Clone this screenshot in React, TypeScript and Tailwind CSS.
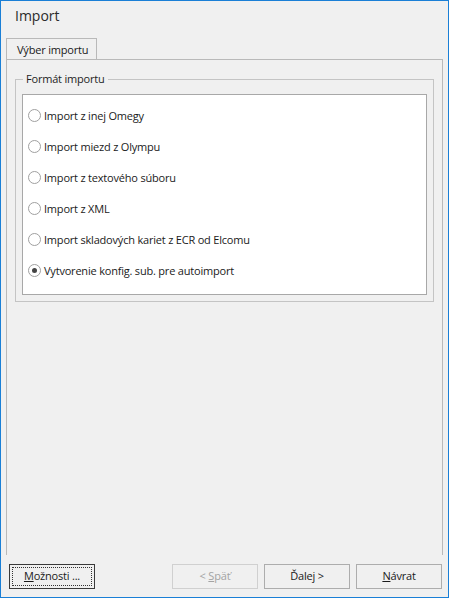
import React from "react";

const items = [
  "Import z inej Omegy",
  "Import miezd z Olympu",
  "Import z textového súboru",
  "Import z XML",
  "Import skladových kariet z ECR od Elcomu",
  "Vytvorenie konfig. sub. pre autoimport",
];

function Radio({ checked }: { checked?: boolean }) {
  return (
    <span className="w-[13px] h-[13px] rounded-full border border-[#a0a0a0] bg-white flex items-center justify-center shrink-0">
      {checked && <span className="w-[5px] h-[5px] rounded-full bg-[#444444]" />}
    </span>
  );
}

export default function App() {
  return (
    <div
      className="w-[449px] h-[598px] border border-[#1a7fd6] bg-[#f0f0f0] flex flex-col text-[11px] tracking-[-0.2px] text-[#1a1a1a] whitespace-nowrap"
      style={{ fontFamily: '"Open Sans", "Noto Sans", sans-serif' }}
    >
      <div className="h-[37px] pl-[14px] pt-[5px] text-[14px] tracking-normal text-[#2b2b2b] leading-[20px]">Import</div>
      <div className="pl-[5px] flex">
        <div className="h-[21px] w-[91px] border border-b-0 border-[#b9b9b9] pl-[10px] pt-[1px] leading-[19px] bg-[#f0f0f0]">
          Výber importu
        </div>
      </div>
      <div className="ml-[5px] mr-[5px] h-[496px] border border-b-0 border-[#b9b9b9] pl-[8px] pr-[8px] pt-[11px]">
        <fieldset className="border border-[#c4c4c4] px-[6px] pb-[6px]">
          <legend className="ml-[1px] px-[3px] leading-[16px] text-[#1e1e1e]">Formát importu</legend>
          <div className="mt-[7px] border border-[#a8a8a8] bg-white h-[201px] pt-[5px] pl-[5px]">
            {items.map((t, i) => (
              <div key={t} className="h-[31px] flex items-center gap-[3px]">
                <Radio checked={i === 5} />
                <span className="leading-[16px]">{t}</span>
              </div>
            ))}
          </div>
        </fieldset>
      </div>
      <div className="mt-[9px] h-[25px] flex pl-[8px] pr-[6px]">
        <div className="w-[86px] h-[25px] border border-[#3a3a3a] p-[2px]">
          <div className="w-full h-full border border-dotted border-[#333] flex items-center justify-center">
            <span><span className="underline">M</span>ožnosti ...</span>
          </div>
        </div>
        <div className="flex-1" />
        <div className="w-[86px] h-[25px] border border-[#d0d0d0] flex items-center justify-center text-[#a3a3a3]">
          <span>&lt; <span className="underline">S</span>päť</span>
        </div>
        <div className="w-[86px] h-[25px] ml-[6px] border border-[#adadad] flex items-center justify-center">
          <span>Ďalej &gt;</span>
        </div>
        <div className="w-[86px] h-[25px] ml-[6px] border border-[#adadad] flex items-center justify-center">
          <span><span className="underline">N</span>ávrat</span>
        </div>
      </div>
    </div>
  );
}
